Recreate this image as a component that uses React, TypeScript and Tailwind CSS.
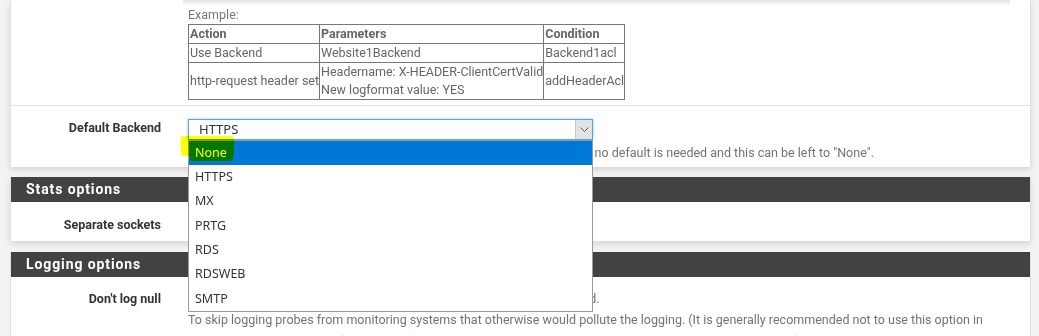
import { ReactNode } from "react";

const OPTIONS = ["None", "HTTPS", "MX", "PRTG", "RDS", "RDSWEB", "SMTP"];

function SectionHeader({ title }: { title: string }) {
  return (
    <div className="h-[25px] bg-[#424242] pl-[15px] flex items-center text-white font-bold text-[14px] tracking-[0.9px]">
      {title}
    </div>
  );
}

function Row({ label, children, className = "" }: { label?: string; children?: ReactNode; className?: string }) {
  return (
    <div className={"flex " + className}>
      <div className="w-[177px] shrink-0 pr-[27px] text-right font-bold text-[12.5px] leading-[18px] text-[#333]">
        {label}
      </div>
      <div className="flex-1 min-w-0">{children}</div>
    </div>
  );
}

function Dropdown() {
  return (
    <div className="absolute left-0 top-[21px] w-[405px] bg-white border border-[#9a9a9a] z-10 font-['Noto_Sans',sans-serif] text-[12.5px] text-[#333]">
      {OPTIONS.map((o, i) => (
        <div
          key={o}
          className={
            "h-[24.3px] flex items-center pl-[6px] " + (i === 0 ? "bg-[#0078d7] text-white" : "")
          }
        >
          {o}
        </div>
      ))}
    </div>
  );
}

export default function App() {
  return (
    <div className="relative w-[1039px] h-[336px] overflow-hidden bg-[#f3f3f3] font-['Roboto',sans-serif] isolate">
      <div className="pl-[10px] pr-[8px]">
        {/* Panel: actions + default backend */}
        <div className="bg-white border-x border-[#e0e0e0] shadow-[0_3px_6px_rgba(0,0,0,0.12)]">
          <Row className="border-b border-[#e3e3e3] pb-[5px]">
            <div className="h-[6px] -ml-[5px] mr-[20px] bg-gradient-to-b from-[#e4e4e4] to-white" />
            <div className="text-[12.5px] leading-[18px] text-[#777]">Example:</div>
            <table className="border-collapse table-fixed text-[12.5px] leading-[18px] text-[#666]">
              <colgroup>
                <col className="w-[131px]" />
                <col className="w-[223px]" />
                <col className="w-[81px]" />
              </colgroup>
              <thead>
                <tr>
                  <th className="border border-[#777] pl-px text-left font-bold whitespace-nowrap">Action</th>
                  <th className="border border-[#777] pl-px text-left font-bold whitespace-nowrap">Parameters</th>
                  <th className="border border-[#777] pl-px text-left font-bold whitespace-nowrap">Condition</th>
                </tr>
              </thead>
              <tbody>
                <tr>
                  <td className="border border-[#777] pl-px whitespace-nowrap">Use Backend</td>
                  <td className="border border-[#777] pl-px whitespace-nowrap">Website1Backend</td>
                  <td className="border border-[#777] pl-px whitespace-nowrap">Backend1acl</td>
                </tr>
                <tr>
                  <td className="border border-[#777] pl-px whitespace-nowrap">http-request header set</td>
                  <td className="border border-[#777] pl-px whitespace-nowrap">
                    Headername: X-HEADER-ClientCertValid
                    <br />
                    New logformat value: YES
                  </td>
                  <td className="border border-[#777] pl-px whitespace-nowrap">addHeaderAcl</td>
                </tr>
              </tbody>
            </table>
          </Row>

          <Row label="Default Backend" className="pt-[13px] pb-[5px]">
            <div className="relative w-[405px]">
              <div className="h-[21px] border border-[#5fa2dd] shadow-[0_0_3px_#9cc8f0] flex items-center bg-white">
                <span className="pl-[10px] flex-1 font-['Noto_Sans',sans-serif] text-[13px] text-[#333]">HTTPS</span>
                <span className="w-[17px] h-full bg-[#e3e3e3] border-l border-[#c8c8c8] flex items-center justify-center">
                  <svg width="9" height="5" viewBox="0 0 9 5" fill="none">
                    <path d="M0.5 0.5L4.5 4.5L8.5 0.5" stroke="#555" strokeWidth="1" />
                  </svg>
                </span>
              </div>
              <Dropdown />
            </div>
            <div className="mt-[4px] text-[12.5px] leading-[18px] text-[#737373] whitespace-nowrap">
              When the actions defined above always pick a backend for every request, no default is needed and this can be left to "None".
            </div>
          </Row>
        </div>

        {/* Stats options */}
        <div className="mt-[10px] bg-white border-x border-[#e0e0e0] shadow-[0_3px_6px_rgba(0,0,0,0.12)]">
          <SectionHeader title="Stats options" />
          <Row label="Separate sockets" className="pt-[14px] h-[39px]">
            <input type="checkbox" className="mt-[3px]" />
          </Row>
        </div>

        {/* Logging options */}
        <div className="mt-[11px] bg-white border-x border-[#e0e0e0]">
          <SectionHeader title="Logging options" />
          <Row label="Don't log null" className="pt-[13px] pb-[20px]">
            <div className="text-[12.5px] leading-[18px] text-[#737373] whitespace-nowrap">
              <div className="flex items-center gap-[6px]">
                <input type="checkbox" />
                <span>A connection on which no data has been transferred will not be logged.</span>
              </div>
              <div className="mt-[3px]">
                To skip logging probes from monitoring systems that otherwise would pollute the logging. (It is generally recommended not to use this option in
              </div>
              <div className="mt-[4px]">
                uncontrolled environments (e.g. internet), otherwise scans and other malicious activities would not be logged.)
              </div>
            </div>
          </Row>
        </div>
      </div>

      {/* highlighter marks over the "None" option */}
      <div className="absolute left-[181px] top-[136px] w-[53px] h-[20px] rounded-[3px] bg-[#ffff00] mix-blend-multiply z-20" />
      <div className="absolute left-[190px] top-[150px] w-[43px] h-[11px] rounded-[3px] bg-[#ffff00] mix-blend-multiply z-20" />
    </div>
  );
}
